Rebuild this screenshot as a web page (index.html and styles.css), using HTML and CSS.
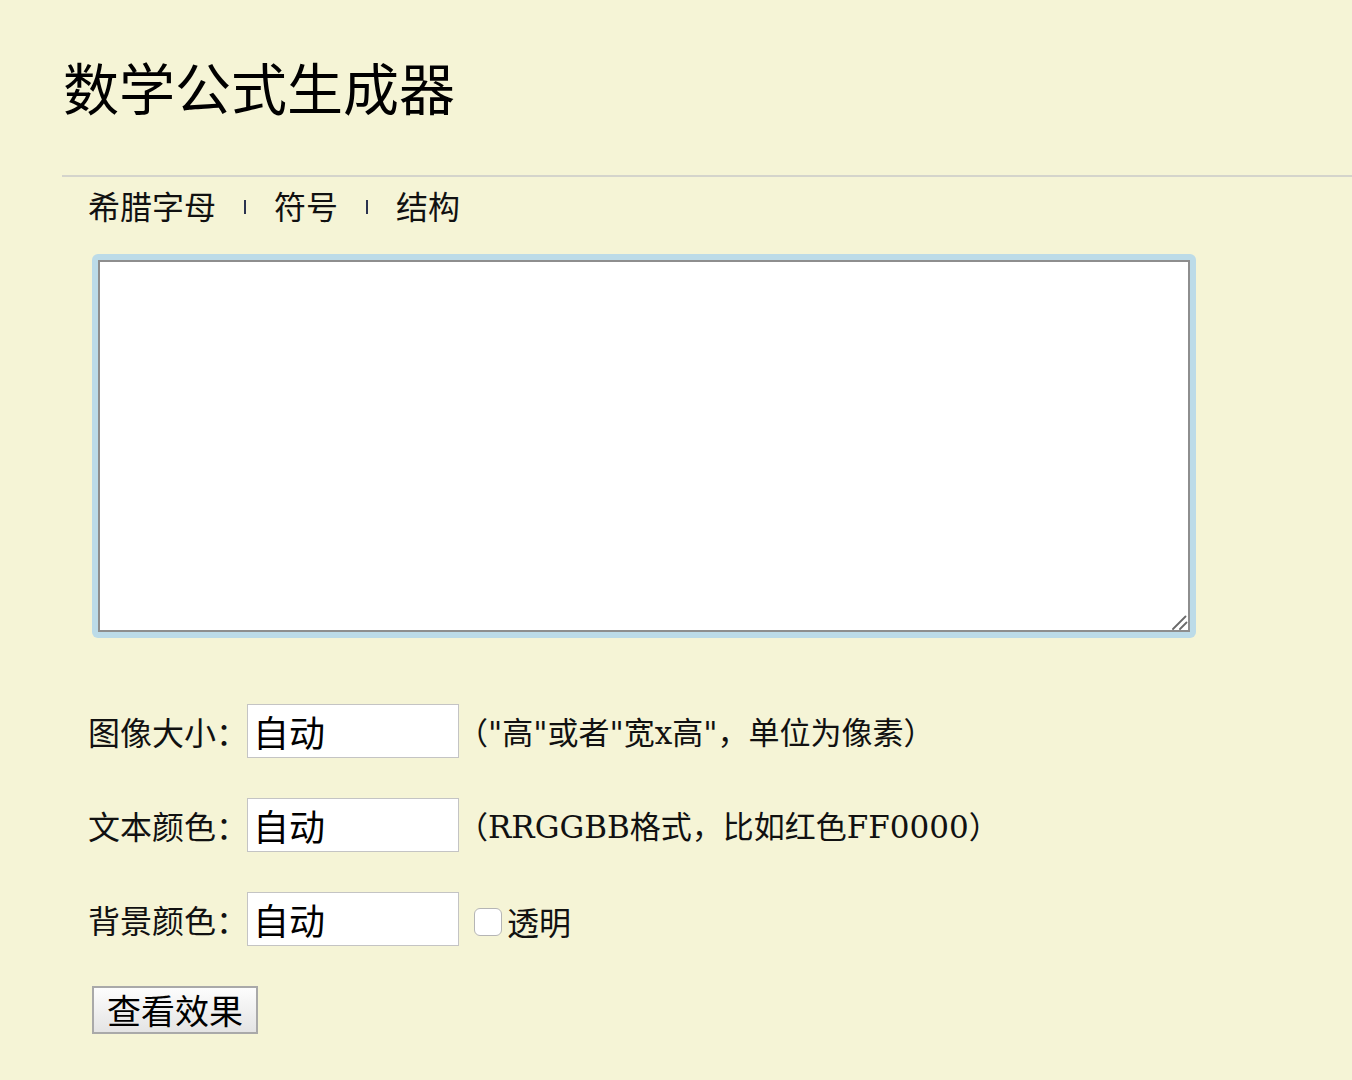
FILE: index.html
```html
<!DOCTYPE html>
<html lang="zh-CN">
<head>
<meta charset="utf-8">
<title>数学公式生成器</title>
<link rel="stylesheet" href="styles.css">
</head>
<body>
<div class="page">
  <h1 class="title">数学公式生成器</h1>
  <div class="rule"></div>
  <nav class="nav">
    <span class="nav-item">希腊字母</span>
    <span class="sep"></span>
    <span class="nav-item">符号</span>
    <span class="sep"></span>
    <span class="nav-item">结构</span>
  </nav>
  <div class="editor">
    <textarea class="formula"></textarea>
    <svg class="grip" width="16" height="16" viewBox="0 0 16 16" aria-hidden="true">
      <path d="M1 15 L13.5 2.5 M8 15 L14.5 8.5" stroke="#6a6a6a" stroke-width="1.8" stroke-linecap="round" fill="none"/>
    </svg>
  </div>
  <div class="form">
    <div class="row">
      <label class="label">图像大小：</label>
      <input class="field" type="text" value="自动">
      <span class="hint">（"高"或者"宽x高"，单位为像素）</span>
    </div>
    <div class="row">
      <label class="label">文本颜色：</label>
      <input class="field" type="text" value="自动">
      <span class="hint">（RRGGBB格式，比如红色FF0000）</span>
    </div>
    <div class="row">
      <label class="label">背景颜色：</label>
      <input class="field" type="text" value="自动">
      <input class="check" type="checkbox">
      <span class="check-label">透明</span>
    </div>
    <div class="row">
      <button class="btn" type="button">查看效果</button>
    </div>
  </div>
</div>
</body>
</html>
```
FILE: styles.css
```css
html, body {
  margin: 0;
  padding: 0;
  background: #f5f4d6;
}
body {
  font-family: "Noto Sans CJK SC", sans-serif;
  color: #111;
}
.page {
  padding-left: 62px;
  padding-bottom: 40px;
}
.title {
  margin: 0;
  padding: 52px 0 0 1px;
  font-size: 56px;
  line-height: 67px;
  font-weight: normal;
  color: #000;
}
.rule {
  margin-top: 56px;
  height: 2px;
  background: #d4d4cc;
}
.nav {
  display: flex;
  align-items: center;
  gap: 28px;
  padding: 8px 0 0 26px;
  font-size: 32px;
  line-height: 40px;
}
.sep {
  display: inline-block;
  width: 2px;
  height: 14px;
  background: #2b3350;
  margin-top: 4px;
}
.editor {
  position: relative;
  margin: 29px 0 0 30px;
  width: 1104px;
  box-sizing: border-box;
  padding: 6px;
  background: #bcdbe8;
  border-radius: 6px;
}
.formula {
  display: block;
  box-sizing: border-box;
  width: 1092px;
  height: 372px;
  margin: 0;
  border: 2px solid #8e8e8e;
  background: #fff;
  outline: none;
  resize: none;
  font-size: 20px;
}
.grip {
  position: absolute;
  right: 8px;
  bottom: 8px;
  pointer-events: none;
}
.form {
  margin-top: 66px;
  padding-left: 26px;
  display: flex;
  flex-direction: column;
  gap: 40px;
}
.row {
  display: flex;
  align-items: center;
  min-height: 48px;
}
.label {
  font-size: 32px;
  line-height: 40px;
  width: 159px;
  white-space: nowrap;
}
.field {
  box-sizing: border-box;
  width: 212px;
  height: 54px;
  margin: 0;
  padding: 0 0 0 5px;
  border: 1px solid #c4c4c4;
  background: #fff;
  font-family: "Noto Sans CJK SC", sans-serif;
  font-size: 36px;
  color: #000;
  outline: none;
}
.hint {
  font-family: "DejaVu Serif", "Noto Sans CJK SC", serif;
  font-size: 31px;
  line-height: 40px;
  margin-left: -2px;
  white-space: nowrap;
  margin-top: 4px;
}
.check {
  appearance: none;
  -webkit-appearance: none;
  box-sizing: border-box;
  width: 28px;
  height: 28px;
  margin: 6px 0 0 15px;
  border: 1px solid #b5b5b5;
  border-radius: 6px;
  background: #fff;
}
.check-label {
  font-size: 32px;
  line-height: 40px;
  margin-left: 5px;
  margin-top: 4px;
}
.btn {
  box-sizing: border-box;
  width: 166px;
  height: 48px;
  margin: 0 0 0 4px;
  padding: 0;
  border: 2px solid #a9a9a9;
  background: linear-gradient(#fdfdfd, #e4e4e4);
  font-family: "Noto Sans CJK SC", sans-serif;
  font-size: 34px;
  line-height: 44px;
  color: #000;
}
```
